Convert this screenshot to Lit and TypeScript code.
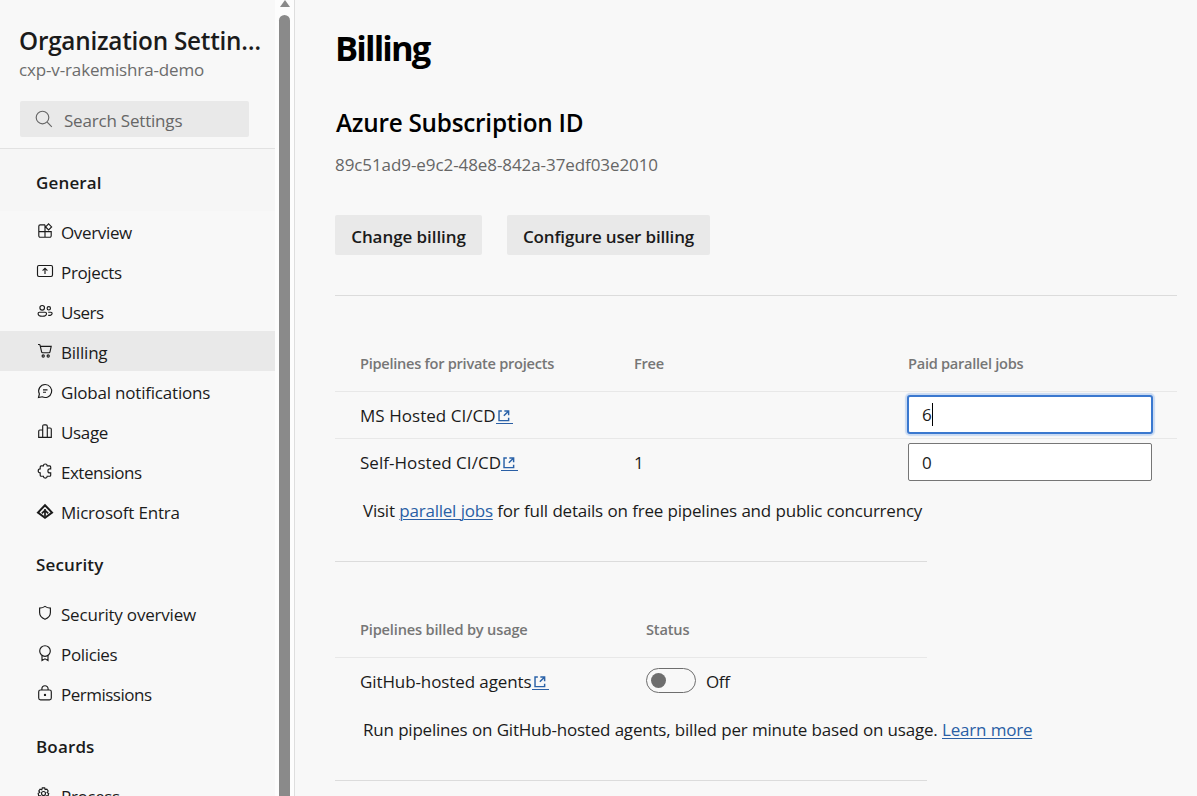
import { LitElement, html, css, svg, nothing } from "lit";
import { customElement, property } from "lit/decorators.js";
import { classMap } from "lit/directives/class-map.js";

const glyphs: Record<string, unknown> = {
  overview: svg`<path d="M8 1.8H3.2A1.4 1.4 0 0 0 1.8 3.2v9.6a1.4 1.4 0 0 0 1.4 1.4h9.6a1.4 1.4 0 0 0 1.4-1.4V8.6H1.8M8 1.8v12.4M11.6.9l3 3-3 3-3-3z"/>`,
  projects: svg`<rect x="0.5" y="2.5" width="15" height="11" rx="1.4"/><path d="M8 11V5.4M5.6 7.6 8 5.2l2.4 2.4"/>`,
  users: svg`<circle cx="5.2" cy="4.8" r="2.3"/><circle cx="11.8" cy="5.3" r="1.7"/><path d="M2.4 9.2h5.8c.8 0 1.3.5 1.3 1.2 0 1.8-1.8 2.8-4.2 2.8S1.1 12.2 1.1 10.4c0-.7.5-1.2 1.3-1.2zM11.2 9.2h2.7c.7 0 1.2.5 1.2 1.1 0 1.5-1.4 2.3-3.9 2.1"/>`,
  billing: svg`<path d="M1 1.5h1.2c.5 0 .8.3.9.8l1.5 6.5c.1.5.5.9 1.1.9h6.3c.5 0 .9-.3 1-.8l1.2-5.5H3.4"/><circle cx="6.2" cy="13" r="1.1"/><circle cx="11.2" cy="13" r="1.1"/>`,
  chat: svg`<path d="M8.2 1.5a6.5 6.5 0 1 1-3 12.3l-3.7.8.9-3.6A6.5 6.5 0 0 1 8.2 1.5zM6 6.8h4.5M6 9.2h3"/>`,
  usage: svg`<path d="M5.7 14.3V3.2c0-.8.6-1.4 1.4-1.4h1.8c.8 0 1.4.6 1.4 1.4v11.1M5.7 7H2.9c-.7 0-1.2.5-1.2 1.2v6.1h12.6V6.2c0-.7-.5-1.2-1.2-1.2h-2.8"/>`,
  extensions: svg`<path d="M6.4 2.9a1.9 1.9 0 0 1 3.8 0h2.5c.6 0 1 .4 1 1v2h-.8a1.9 1.9 0 0 0 0 4h.8v2.3c0 .6-.4 1-1 1h-2.5a1.9 1.9 0 0 1-3.8 0H4.2c-.6 0-1-.4-1-1V9.900a1.900 1.900 0 0 1 0-4v-2c0-.6.4-1 1-1z"/>`,
  entra: svg`<path d="M8 2.200 15 9.500 8 14.700 1 9.500z" stroke-width="2"/><path d="M8 6v7.500M8 7.300 4.800 10.300M8 7.300l3.200 3" stroke-width="1.700"/>`,
  shield: svg`<path d="M8 1.4c1.5 1.2 3.3 1.7 5.4 1.7v4.5c0 3-1.8 5.3-5.4 6.7-3.6-1.4-5.4-3.7-5.4-6.7V3.1c2.1 0 3.9-.5 5.4-1.7z"/>`,
  policies: svg`<circle cx="8" cy="6" r="5.3"/><path d="M5 10.500v5l3-1.700 3 1.700v-5"/>`,
  lock: svg`<rect x="1.700" y="5" width="12.600" height="9.800" rx="1.800"/><path d="M4.900 5V3.800a3.100 3.100 0 0 1 6.200 0V5"/><circle cx="8" cy="9.900" r="0.600"/>`,
  gear: svg`<circle cx="6.500" cy="6.500" r="2"/><path d="m5.300.9 2.400 0 .4 1.700 1.700-.5 1.400 1.900-1.100 1.500 1.600 1-.6 2.200-1.900.1.100 1.900-2.100.8-.7-1.400-1.300 1.300-2-1 .3-1.700-1.900-.2-.4-2.200 1.600-.9-1-1.500 1.300-1.800 1.700.6z"/>`,
  external: svg`<path d="M4.500 1.200H1.200v11.200h11.200V9M7.400 1.200h5v5M12.200 1.400 6.800 6.800" stroke-width="1.700"/>`,
  search: svg`<circle cx="7.500" cy="7.500" r="6.300"/><path d="m12.200 12.200 4.600 4.600"/>`,
};

@customElement("ui-icon")
class UiIcon extends LitElement {
  @property() name = "";
  @property({ type: Number }) box = 16;
  static styles = css`
    :host { display: block; flex: none; }
    svg { display: block; width: 100%; height: 100%; overflow: visible; fill: none; stroke: currentColor; stroke-width: 1.15; }
  `;
  render() {
    return html`<svg viewBox="0 0 ${this.box} ${this.box}" aria-hidden="true">${glyphs[this.name] ?? nothing}</svg>`;
  }
}

type Spacing = "tight" | "even" | "loose";
interface NavGroup { title: string; items: [string, string, Spacing][] }

const groups: NavGroup[] = [
  { title: "General", items: [
    ["overview", "Overview", "even"], ["projects", "Projects", "even"], ["users", "Users", "tight"], ["billing", "Billing", "loose"],
    ["chat", "Global notifications", "loose"], ["usage", "Usage", "even"], ["extensions", "Extensions", "tight"], ["entra", "Microsoft Entra", "loose"],
  ] },
  { title: "Security", items: [["shield", "Security overview", "loose"], ["policies", "Policies", "even"], ["lock", "Permissions", "tight"]] },
  { title: "Boards", items: [["gear", "Process", "even"]] },
];

@customElement("settings-nav")
class SettingsNav extends LitElement {
  static styles = css`
    :host { display: flex; width: 294px; height: 796px; flex: none; overflow: hidden; border-right: 1px solid #dedede; background: #fdfdfd; }
    .panel { width: 275px; background: #f8f8f8; color: #1b1b1b; }
    .head { box-sizing: border-box; height: 149px; padding: 25px 0 0 20px; border-bottom: 1px solid #e2e2e2; }
    .title { margin-left: -1px; font-size: 24.3px; line-height: 32px; font-weight: 600; letter-spacing: -0.24px; white-space: nowrap; }
    .org { margin: 1px 0 0 -1px; line-height: 24px; color: #6c6c6c; letter-spacing: -0.14px; }
    .search { display: flex; width: 229px; height: 36px; margin-top: 19px; box-sizing: border-box; padding-left: 15px; background: #e9e9e9; border-radius: 2px; color: #666; letter-spacing: -0.2px; }
    .search ui-icon { width: 17px; height: 17px; margin-top: 9px; }
    .search span { padding: 3px 0 0 12px; line-height: 33px; }
    .group { box-sizing: border-box; height: 62px; padding: 22px 0 0 36px; line-height: 24px; font-weight: 600; letter-spacing: 0.15px; }
    .first { background: #f6f6f6; }
    .item { display: flex; box-sizing: border-box; height: 40px; padding-left: 37px; }
    .even { letter-spacing: -0.35px; }
    .tight { letter-spacing: -0.5px; }
    .loose { letter-spacing: -0.2px; }
    .item ui-icon { width: 16px; height: 16px; margin-top: 12px; }
    .item span { padding: 3px 0 0 8px; line-height: 37px; }
    .on { background: #e9e9e9; }
    .bar { width: 19px; display: flex; flex-direction: column; align-items: center; }
    .arrow { width: 0; border: 5px solid transparent; border-top: 0; border-bottom: 7px solid #8a8a8a; }
    .thumb { width: 11px; height: 800px; margin-top: 8px; flex: none; border-radius: 6px; background: #8a8a8a; }
  `;
  render() {
    return html`
      <nav class="panel">
        <div class="head">
          <div class="title">Organization Settin…</div>
          <div class="org">cxp-v-rakemishra-demo</div>
          <div class="search"><ui-icon name="search" box="17"></ui-icon><span>Search Settings</span></div>
        </div>
        ${groups.map((g, i) => html`
          <div class=${classMap({ group: true, first: i === 0 })}>${g.title}</div>
          ${g.items.map(([icon, label, spacing]) => html`
            <div class=${classMap({ item: true, on: label === "Billing", [spacing]: true })}><ui-icon name=${icon}></ui-icon><span>${label}</span></div>`)}`)}
      </nav>
      <div class="bar"><div class="arrow"></div><div class="thumb"></div></div>`;
  }
}

@customElement("billing-page")
class BillingPage extends LitElement {
  static styles = css`
    :host { display: block; flex: 1; box-sizing: border-box; height: 796px; padding: 24px 20px 0 40px; overflow: hidden; background: #f8f8f8; color: #1b1b1b; letter-spacing: -0.19px; }
    h1 { margin: 0; font-size: 34.5px; line-height: 48px; font-weight: 700; letter-spacing: -1.85px; color: #000; }
    h2 { margin: 35px 0 0 1px; font-size: 24.3px; line-height: 32px; font-weight: 600; letter-spacing: -0.24px; color: #000; }
    .id { margin: 14px 0 0 0; line-height: 24px; color: #666; letter-spacing: -0.08px; }
    .buttons { display: flex; gap: 25px; margin-top: 38px; }
    .btn { box-sizing: border-box; width: 147px; height: 40px; padding-top: 3px; line-height: 37px; text-align: center; font-weight: 600; border-radius: 2px; background: #e9e9e9; letter-spacing: -0.07px; white-space: nowrap; }
    .wide { width: 203px; letter-spacing: -0.18px; }
    .rule { height: 1px; background: #dcdcdc; }
    .top { margin-top: 40px; }
    .short { width: 592px; }
    .row { display: grid; grid-template-columns: 274px 274px 1fr; box-sizing: border-box; height: 47px; padding: 12px 0 0 25px; line-height: 24px; border-bottom: 1px solid #e8e8e8; }
    .last { border-bottom-color: transparent; }
    .th { height: 96px; padding-top: 55px; font-size: 14.6px; font-weight: 600; color: #767676; letter-spacing: -0.27px; }
    .usage { width: 592px; grid-template-columns: 286px 1fr; }
    .th.usage { letter-spacing: -0.17px; }
    .name { display: flex; letter-spacing: 0.04px; }
    .usage .name { letter-spacing: -0.1px; }
    .ext { box-sizing: border-box; width: 17px; height: 20px; padding: 6px 0 0 2px; border-bottom: 1px solid #2a5fa5; color: #2a62a8; }
    .ext ui-icon { width: 12px; height: 12px; }
    .field { display: flex; box-sizing: border-box; width: 244px; height: 38px; margin-top: -8px; padding: 1px 0 0 13px; line-height: 35px; background: #fff; border: 1px solid #767676; border-radius: 2px; }
    .focus { width: 246px; height: 39px; margin: -9px 0 0 -1px; padding: 0 0 0 13px; border: 2px solid #3a78cf; border-radius: 3px; box-shadow: 0 0 1px 2px #c9daf2; line-height: 36px; }
    .caret { width: 1px; height: 23px; margin-top: 6px; background: #000; }
    .note { padding: 13px 0 0 28px; line-height: 24px; white-space: nowrap; word-spacing: 0.3px; letter-spacing: -0.22px; }
    a { color: #2a5fa5; text-decoration: underline; text-underline-offset: 2px; text-decoration-thickness: 1px; }
    .gap1 { margin-top: 38px; }
    .state { display: flex; letter-spacing: -0.35px; }
    .toggle { box-sizing: border-box; width: 50px; height: 25px; margin: -2px 10px 0 0; padding: 4px; border: 1px solid #6e6e6e; border-radius: 13px; }
    .knob { width: 15px; height: 15px; border-radius: 50%; background: #6e6e6e; }
  `;
  private ext() {
    return html`<span class="ext"><ui-icon name="external" box="14"></ui-icon></span>`;
  }
  render() {
    return html`
      <h1>Billing</h1>
      <h2>Azure Subscription ID</h2>
      <div class="id">89c51ad9-e9c2-48e8-842a-37edf03e2010</div>
      <div class="buttons"><div class="btn">Change billing</div><div class="btn wide">Configure user billing</div></div>
      <div class="rule top"></div>
      <div class="row th"><span>Pipelines for private projects</span><span>Free</span><span>Paid parallel jobs</span></div>
      <div class="row"><span class="name">MS Hosted CI/CD${this.ext()}</span><span></span><div class="field focus">6<span class="caret"></span></div></div>
      <div class="row last"><span class="name">Self-Hosted CI/CD${this.ext()}</span><span>1</span><div class="field">0</div></div>
      <div class="note">Visit <a>parallel jobs</a> for full details on free pipelines and public concurrency</div>
      <div class="rule short gap1"></div>
      <div class="row th usage"><span>Pipelines billed by usage</span><span>Status</span></div>
      <div class="row last usage"><span class="name">GitHub-hosted agents${this.ext()}</span><span class="state"><span class="toggle"><div class="knob"></div></span>Off</span></div>
      <div class="note">Run pipelines on GitHub-hosted agents, billed per minute based on usage. <a>Learn more</a></div>
      <div class="rule short gap1"></div>`;
  }
}

@customElement("app-root")
class AppRoot extends LitElement {
  static styles = css`
    :host { display: flex; width: 1197px; height: 796px; overflow: hidden; font: 17px "Open Sans", "Noto Sans", sans-serif; }
  `;
  render() {
    return html`<settings-nav></settings-nav><billing-page></billing-page>`;
  }
}
